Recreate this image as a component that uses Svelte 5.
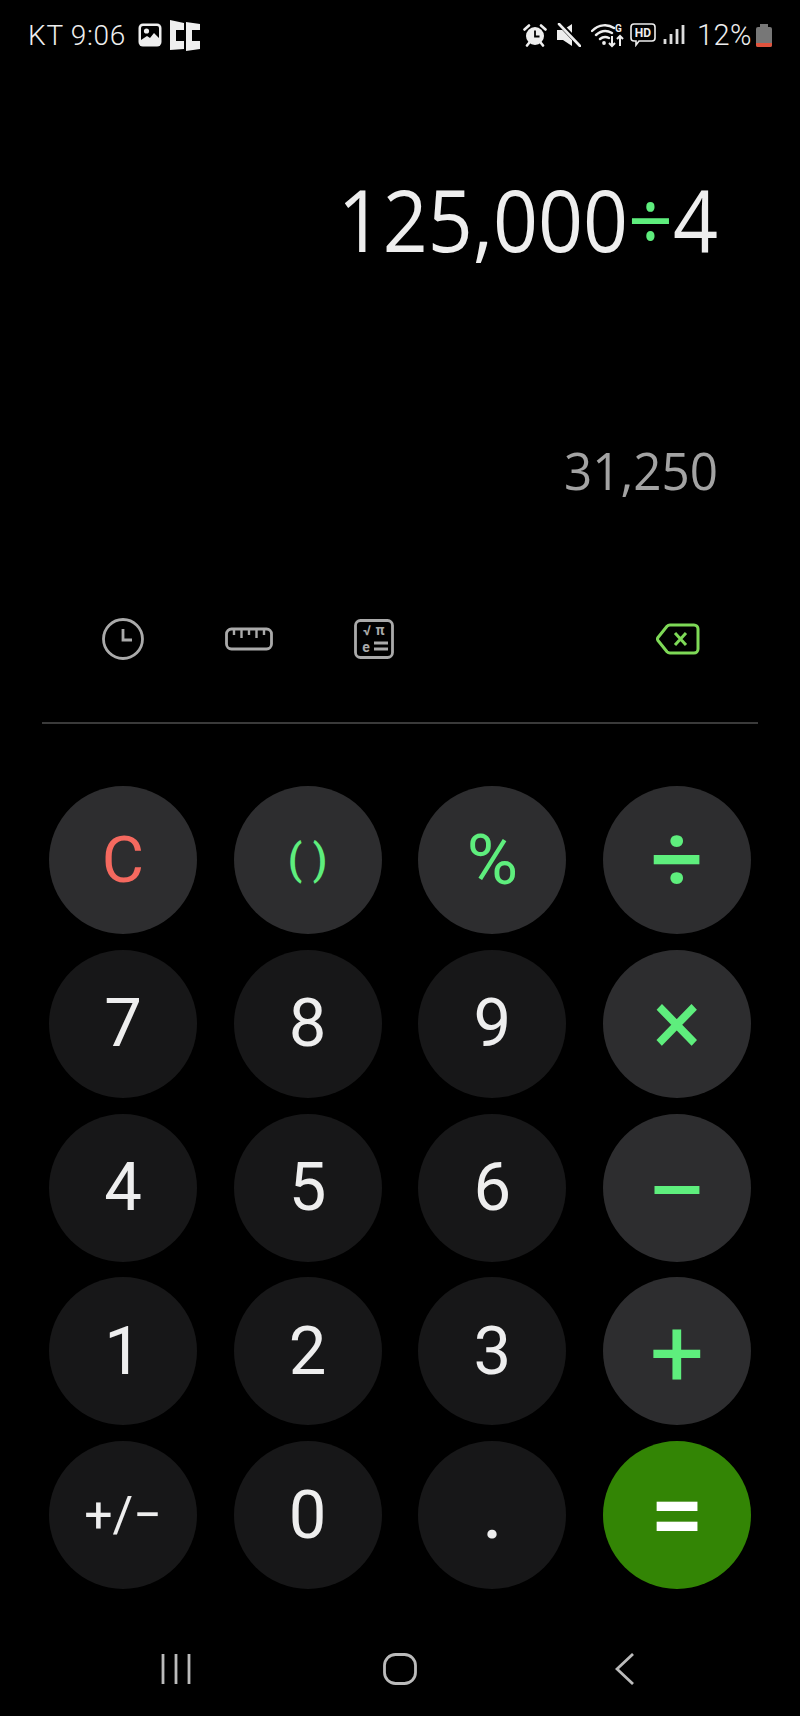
<script lang="ts">
  type Key = { label: string; kind: 'num' | 'fn' | 'op' | 'eq' | 'clear'; cls?: string };

  const keys: Key[] = [
    { label: 'C', kind: 'clear' },
    { label: '( )', kind: 'fn', cls: 'paren' },
    { label: '%', kind: 'fn', cls: 'pct' },
    { label: '÷', kind: 'op', cls: 'div' },
    { label: '7', kind: 'num' },
    { label: '8', kind: 'num' },
    { label: '9', kind: 'num' },
    { label: '×', kind: 'op', cls: 'mul' },
    { label: '4', kind: 'num' },
    { label: '5', kind: 'num' },
    { label: '6', kind: 'num' },
    { label: '−', kind: 'op', cls: 'sub' },
    { label: '1', kind: 'num' },
    { label: '2', kind: 'num' },
    { label: '3', kind: 'num' },
    { label: '+', kind: 'op', cls: 'add' },
    { label: '+/−', kind: 'num', cls: 'sign' },
    { label: '0', kind: 'num' },
    { label: '.', kind: 'num', cls: 'dot' },
    { label: '=', kind: 'eq' },
  ];
</script>

<div class="phone">
  <header class="status">
    <div class="status-left">
      <span class="clock">KT 9:06</span>
      <svg class="ic-gallery" viewBox="0 0 24 24" width="24" height="24">
        <rect x="0.500" y="0.500" width="23" height="23" rx="4.500" fill="#eee" />
        <rect x="3" y="3" width="18" height="18" rx="2" fill="#000" />
        <circle cx="8.500" cy="8" r="2.600" fill="#eee" />
        <path d="M3 17l6-4 3 2 4-5 5 5v6H3z" fill="#eee" />
      </svg>
      <svg class="ic-split" viewBox="0 0 30 32" width="30" height="32">
        <path d="M0 4l14-3v30l-14-1V22h8V11H0z" fill="#eee" transform="matrix(-1 0 0 1 14 0)" />
        <path d="M16 3l14 2v6h-8v11h8v8l-14 2z" fill="#eee" />
      </svg>
    </div>
    <div class="status-right">
      <svg viewBox="0 0 24 24" width="24" height="24" class="ic-alarm">
        <circle cx="12" cy="13" r="9" fill="#eee" />
        <path d="M12 7.500v6h4.500" fill="none" stroke="#000" stroke-width="1.800" />
        <path d="M1.500 6.500L6 2.500M22.500 6.500L18 2.500M6 20l-2 2.500M18 20l2 2.500" stroke="#eee" stroke-width="2.600" stroke-linecap="round" />
      </svg>
      <svg viewBox="0 0 24 24" width="24" height="24" class="ic-mute">
        <path d="M0 7h6l9-6v22l-9-6H0z" fill="#eee" />
        <path d="M1 -1l25 26" stroke="#000" stroke-width="5" />
        <path d="M2 1l21 22" stroke="#eee" stroke-width="2.600" stroke-linecap="round" />
      </svg>
      <svg viewBox="0 0 34 26" width="34" height="26" class="ic-wifi">
        <path d="M1 9c7-7 16-7 22-3M5 13c5-4.500 11-5 16-2M9 17c3-2.500 6-2.500 9-1" fill="none" stroke="#eee" stroke-width="2.400" stroke-linecap="round" />
        <circle cx="13" cy="21" r="1.900" fill="#eee" />
        <path d="M21 14v10M18 21l3 3 3-3M29 24V14M26 17l3-3 3 3" fill="none" stroke="#eee" stroke-width="2" />
        <text x="24" y="10" class="g">G</text>
      </svg>
      <svg viewBox="0 0 26 24" width="26" height="24" class="ic-hd">
        <path d="M4 1h18a3 3 0 0 1 3 3v11a3 3 0 0 1-3 3H9l-3 4v-4H4a3 3 0 0 1-3-3V4a3 3 0 0 1 3-3z" fill="none" stroke="#eee" stroke-width="1.600" />
        <text x="13" y="14" text-anchor="middle" class="hd">HD</text>
      </svg>
      <svg viewBox="0 0 22 22" width="22" height="22" class="ic-signal">
        <path d="M2 15v5M8 10v10M14 5v15M20 1v19" stroke="#ddd" stroke-width="2.800" fill="none" />
      </svg>
      <span class="batt-text">12%</span>
      <span class="battery"><i class="nub"></i><i class="body"><b></b></i></span>
    </div>
  </header>

  <section class="display">
    <div class="expr">125,000<span class="op-sign">÷</span>4</div>
    <div class="result-row"><div class="result">31,250</div></div>
  </section>

  <section class="tools">
    <div class="tools-left">
      <svg viewBox="0 0 42 42" width="42" height="42">
        <circle cx="21" cy="21" r="19.500" fill="none" stroke="#aaa" stroke-width="2.800" />
        <path d="M21 11v11h9" fill="none" stroke="#aaa" stroke-width="2.800" />
      </svg>
      <svg viewBox="0 0 48 24" width="48" height="24">
        <rect x="1.500" y="2" width="45" height="20" rx="5" fill="none" stroke="#aaa" stroke-width="2.800" />
        <path d="M9 3v5M16.500 3v8M24 3v5M31.500 3v8M39 3v5" stroke="#aaa" stroke-width="2.400" />
      </svg>
      <svg viewBox="0 0 40 40" width="40" height="40" class="sci">
        <rect x="1.500" y="1.500" width="37" height="37" rx="5" fill="none" stroke="#aaa" stroke-width="2.800" />
        <text x="13" y="16" text-anchor="middle" class="sym">√</text>
        <text x="26" y="16" text-anchor="middle" class="sym">π</text>
        <text x="12" y="33" text-anchor="middle" class="sym">e</text>
        <path d="M20 24h14M20 30h14" stroke="#aaa" stroke-width="2.800" />
      </svg>
    </div>
    <svg viewBox="0 0 44 32" width="44" height="32" class="back">
      <path d="M14 2h24a4 4 0 0 1 4 4v20a4 4 0 0 1-4 4H14a4 4 0 0 1-3-1.300L2 17.500a2.500 2.500 0 0 1 0-3L11 3.300A4 4 0 0 1 14 2z" fill="none" stroke="#7ed957" stroke-width="3" />
      <path d="M19 10l11 12M30 10L19 22" stroke="#7ed957" stroke-width="3" />
    </svg>
  </section>

  <hr class="rule" />

  <section class="pad">
    {#each keys as k}
      <button class="key {k.kind} {k.cls ?? ''}">{k.label}</button>
    {/each}
  </section>

  <nav class="navbar">
    <svg viewBox="0 0 32 32" width="32" height="32">
      <path d="M3 1v30M16 1v30M29 1v30" stroke="#bbb" stroke-width="2.800" />
    </svg>
    <svg viewBox="0 0 34 32" width="34" height="32" class="nav-home">
      <rect x="1.500" y="1.500" width="31" height="29" rx="11" fill="none" stroke="#bbb" stroke-width="2.800" />
    </svg>
    <svg viewBox="0 0 20 32" width="20" height="32">
      <path d="M18 1L2 16l16 15" fill="none" stroke="#bbb" stroke-width="2.800" />
    </svg>
  </nav>
</div>

<style>
  :global(body) {
    margin: 0;
    background: #000;
  }

  .phone {
    width: 800px;
    height: 1716px;
    background: #000;
    color: #eee;
    font-family: Roboto, sans-serif;
    overflow: hidden;
  }

  .status {
    height: 70px;
    box-sizing: border-box;
    padding: 0 28px 0 28px;
    display: flex;
    justify-content: space-between;
    align-items: center;
  }
  .status-left,
  .status-right {
    display: flex;
    align-items: center;
  }
  .clock {
    font-size: 28px;
    font-weight: 300;
    letter-spacing: 0.700px;
  }
  .ic-gallery { margin-left: 12px; }
  .ic-split { margin-left: 8px; }
  .ic-mute { margin-left: 10px; }
  .ic-wifi { margin-left: 10px; }
  .ic-hd { margin-left: 5px; }
  .ic-signal { margin-left: 7px; }
  .g { font-size: 10px; fill: #eee; font-weight: 700; font-family: Roboto, sans-serif; }
  .hd { font-size: 12px; fill: #eee; font-weight: 700; font-family: Roboto, sans-serif; }
  .sym { font-size: 14px; fill: #aaa; font-weight: 700; font-family: Roboto, sans-serif; }
  .batt-text {
    margin-left: 12px;
    font-size: 29px;
    font-weight: 300;
    letter-spacing: 0.500px;
  }
  .battery {
    margin-left: 4px;
    width: 16px;
    display: flex;
    flex-direction: column;
    align-items: center;
  }
  .nub {
    width: 8px;
    height: 3px;
    background: #777;
  }
  .body {
    width: 16px;
    height: 20px;
    border-radius: 2px;
    background: #777;
    display: flex;
    align-items: flex-end;
    overflow: hidden;
  }
  .body b {
    display: block;
    width: 100%;
    height: 4px;
    background: #e0533d;
  }

  .display {
    height: 539px;
    box-sizing: border-box;
    padding: 99px 82px 0 0;
    text-align: right;
    font-family: "Open Sans", sans-serif;
  }
  .expr {
    font-size: 86px;
    line-height: 100px;
    font-weight: 400;
    color: #eee;
    white-space: nowrap;
    transform: scaleX(0.915);
    transform-origin: right center;
  }
  .op-sign { color: #5eee7d; }
  .result-row {
    margin-top: 171px;
  }
  .result {
    font-size: 52px;
    line-height: 60px;
    font-weight: 400;
    color: #a3a3a3;
    transform: scaleX(0.95);
    transform-origin: right center;
  }

  .tools {
    display: flex;
    align-items: center;
    justify-content: space-between;
    padding: 0 100px 0 102px;
    height: 60px;
  }
  .tools-left {
    display: flex;
    align-items: center;
    gap: 81px;
  }

  .rule {
    margin: 53px 42px 0;
    border: 0;
    height: 2px;
    background: #3a3a3a;
  }

  .pad {
    margin-top: 62px;
    padding-left: 49px;
    display: grid;
    grid-template-columns: repeat(4, 148px);
    grid-auto-rows: 148px;
    column-gap: 36.670px;
    row-gap: 15.800px;
  }
  .key {
    border: 0;
    padding: 0;
    border-radius: 50%;
    background: #171718;
    color: #eee;
    font-family: Roboto, sans-serif;
    font-size: 67px;
    font-weight: 400;
    line-height: 1;
    overflow: hidden;
  }
  .key.clear {
    background: #2d2d2f;
    color: #f5695f;
    font-size: 65px;
    font-weight: 400;
  }
  .key.fn {
    background: #2d2d2f;
    color: #5eee7d;
    font-weight: 500;
  }
  .key.paren { font-size: 42px; }
  .key.pct { font-size: 70px; font-weight: 400; }
  .key.op {
    background: #2d2d2f;
    color: #5eee7d;
    font-weight: 400;
  }
  .key.div { font-size: 92px; font-weight: 500; }
  .key.mul { font-size: 92px; }
  .key.sub { font-size: 110px; padding-top: 8px; }
  .key.add { font-size: 96px; padding-top: 6px; }
  .key.eq {
    background: #338505;
    color: #fff;
    font-size: 96px;
    font-weight: 500;
  }
  .key.sign { font-size: 50px; font-weight: 400; }
  .key.dot { font-weight: 500; }

  .navbar {
    margin-top: 64px;
    padding: 0 165px 0 160px;
    display: flex;
    justify-content: space-between;
    align-items: center;
  }
  .nav-home { margin-right: 8px; }
</style>
